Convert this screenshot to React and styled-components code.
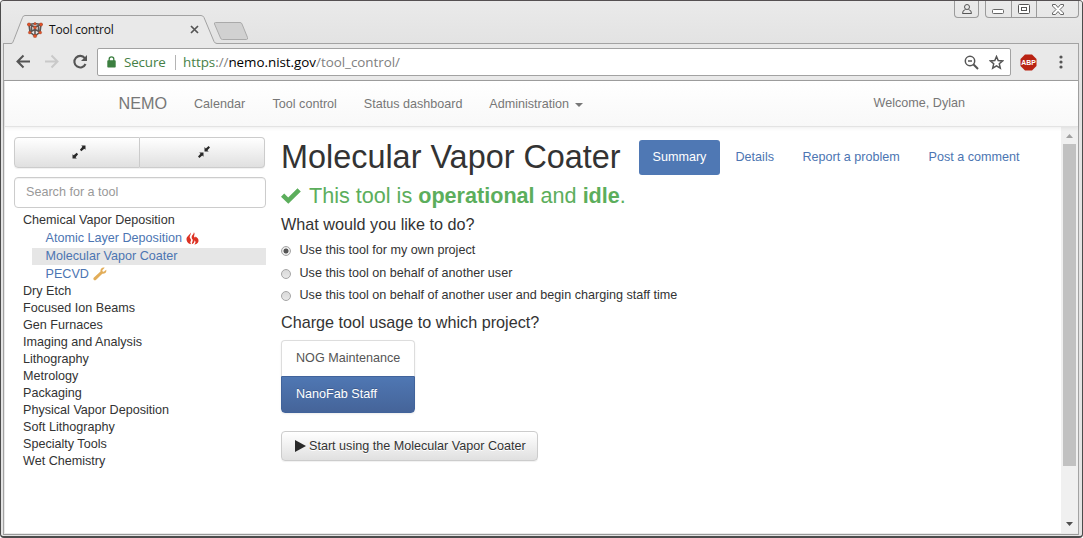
import React from "react";
import styled, { createGlobalStyle, css } from "styled-components";

const Global = createGlobalStyle`
  *, *::before, *::after { box-sizing: border-box; }
  body { margin: 0; background: #fff; overflow: hidden; }
  button, input { font: inherit; }
  svg { display: block; flex: none; }
`;

const ui = `"Open Sans", "Noto Sans", sans-serif`;

const BrowserWindow = styled.div`
  width: 1083px;
  height: 538px;
  display: flex;
  flex-direction: column;
  border: 1px solid #4c4c4c;
  border-top-color: #555052;
  border-bottom-width: 2px;
  border-radius: 4px;
  background: #e4e4e4;
  overflow: hidden;
  font-family: "Liberation Sans", Arial, sans-serif;
  font-size: 12.6px;
  color: #333;
`;

const TitleBar = styled.div`
  height: 42px;
  flex: none;
  display: flex;
  align-items: flex-start;
  padding-left: 9px;
  background: linear-gradient(#eaeaea, #e3e3e3);
`;

const Tab = styled.div`
  position: relative;
  width: 208px;
  height: 29px;
  margin-top: 14px;
  display: flex;
  align-items: center;
  padding: 0 19px 0 17px;
  z-index: 1;
`;

const TabShape = styled.svg`
  position: absolute;
  inset: 0;
  z-index: -1;
`;

const TabTitle = styled.span`
  flex: 1;
  margin-left: 6px;
  font: 12px/16px ${ui};
  letter-spacing: -0.2px;
  color: #111;
`;

const NewTab = styled.svg`
  margin: 21px 0 0 -5px;
`;

const WindowControls = styled.div`
  display: flex;
  margin-left: auto;
  margin-right: 3px;
`;

const ControlGroup = styled.div`
  display: flex;
  height: 17px;
  margin-left: ${(p) => p.$gap || 0}px;
  border: 1px solid #9b9b9b;
  border-top: 0;
  border-radius: 0 0 4px 4px;
`;

const Control = styled.div`
  width: ${(p) => p.$w}px;
  height: 16px;
  display: flex;
  align-items: center;
  justify-content: center;
  & + & { border-left: 1px solid #9b9b9b; }
`;

const Frame = styled.div`
  flex: 1;
  min-height: 0;
  margin: 0 3px 1px 2px;
  display: flex;
  flex-direction: column;
  border: 1px solid #a3a3a3;
  border-bottom-color: #9a9a9a;
  padding: 0 0 1px 1px;
  background: #e9e9e9;
`;

const Toolbar = styled.div`
  height: 37px;
  flex: none;
  display: flex;
  align-items: center;
  margin-left: -1px;
  border-bottom: 1px solid #9f9f9f;
  padding: 0 14px 0 12px;
  background: #e9e9e9;
`;

const NavIcons = styled.div`
  display: flex;
  gap: 13px;
  margin-right: 9px;
`;

const AddressBar = styled.div`
  width: 914px;
  height: 28px;
  display: flex;
  align-items: center;
  border: 1px solid #a2a2a2;
  border-radius: 2px;
  background: #fff;
  padding: 0 6px 0 9px;
  font: 13.4px/20px ${ui};
  color: #808080;
`;

const Secure = styled.span`
  margin-left: 8px;
  box-sizing: content-box;
  width: 51px;
  letter-spacing: -0.15px;
  border-right: 1px solid #b4b4b4;
  margin-right: 7px;
  line-height: 15px;
  color: #467f46;
  white-space: nowrap;
`;

const Url = styled.span`
  flex: 1;
  letter-spacing: -0.03px;
`;
const Scheme = styled.span`color: #467f46;`;
const Host = styled.span`color: #000;`;

const AddressActions = styled.div`
  display: flex;
  gap: 10px;
`;

const Extensions = styled.div`
  display: flex;
  align-items: center;
  margin-left: 9px;
`;

const Badge = styled.svg`
  margin-right: 22px;
`;

const Navbar = styled.nav`
  height: 46px;
  flex: none;
  display: flex;
  align-items: center;
  padding: 0 113px 1px 113px;
  border-bottom: 1px solid #e3e3e3;
  background: linear-gradient(#fff, #f8f8f8);
  color: #777;
  z-index: 1;
  box-shadow: 0 1px 4px rgba(0, 0, 0, 0.075);
`;

const Brand = styled.span`
  width: 76px;
  padding: 1px 0 0 0.5px;
  font-size: 16.2px;
`;

const NavLink = styled.span`
  display: flex;
  align-items: center;
  width: ${(p) => p.$w}px;
  padding-top: 1px;
  white-space: nowrap;
`;

const Caret = styled.i`
  margin: 2px 0 0 6px;
  border: 4px solid transparent;
  border-top: 4px solid #777;
  border-bottom: 0;
`;

const Welcome = styled.span`
  margin-left: auto;
  padding-bottom: 1px;
`;

const Viewport = styled.div`
  flex: 1;
  min-height: 0;
  display: flex;
  background: #fff;
`;

const Sidebar = styled.aside`
  width: 261px;
  flex: none;
  padding: 10px 0 0 9px;
`;

const raised = css`
  border: 1px solid #ccc;
  background: linear-gradient(#fff, #e0e0e0);
  box-shadow: 0 1px 1px rgba(0, 0, 0, 0.06);
`;

const ButtonPair = styled.div`
  display: flex;
  width: 251px;
  height: 31px;
`;

const PairButton = styled.button`
  ${raised}
  display: flex;
  align-items: center;
  justify-content: center;
  flex: 1;
  padding: 0 0 2px 4px;
  &:first-child { border-radius: 4px 0 0 4px; }
  &:last-child { border-radius: 0 4px 4px 0; border-left-width: 0; }
`;

const Search = styled.input`
  display: block;
  width: 252px;
  height: 31px;
  margin: 9px 0 3px;
  padding: 0 11px 2px;
  border: 1px solid #ccc;
  border-radius: 4px;
  box-shadow: inset 0 1px 1px rgba(0, 0, 0, 0.06);
  outline: 0;
  &::placeholder { color: #999; opacity: 1; }
`;

const Tree = styled.ul`
  width: 252px;
  margin: 0;
  padding: 1px 0 0 9px;
  list-style: none;
  line-height: 17px;
`;

const Category = styled.li`
  white-space: nowrap;
`;

const ToolList = styled.ul`
  margin: 0 0 0 9px;
  padding: 0;
  list-style: none;
`;

const Tool = styled.li`
  display: flex;
  align-items: center;
  height: ${(p) => p.$h || 17}px;
  padding-left: 13.5px;
  gap: 4px;
  color: #4c75b2;
  background: ${(p) => (p.$selected ? "#e6e6e6" : "transparent")};
`;

const Main = styled.main`
  flex: 1;
  padding: 12px 0 0 15px;
`;

const Heading = styled.div`
  display: flex;
  height: 36px;
`;

const Title = styled.h1`
  width: 358px;
  margin: 0;
  font-size: 32.4px;
  font-weight: 400;
  line-height: 36px;
  white-space: nowrap;
`;

const Tabs = styled.div`
  display: flex;
  gap: 2px;
  margin-top: 1px;
  height: 35px;
`;

const Pill = styled.span`
  width: ${(p) => p.$w}px;
  display: flex;
  align-items: center;
  padding: 0 0 1px 13.5px;
  border-radius: 3px;
  white-space: nowrap;
  color: ${(p) => (p.$active ? "#fff" : "#4c75b2")};
  background: ${(p) => (p.$active ? "#4f78b4" : "none")};
`;

const Status = styled.div`
  display: flex;
  align-items: center;
  gap: 8px;
  height: 28px;
  margin-top: 7px;
  font-size: 21.6px;
  color: #5cae5c;
  white-space: nowrap;
`;

const Question = styled.h4`
  height: 18px;
  margin: ${(p) => p.$top}px 0 0;
  font-size: 16.2px;
  font-weight: 400;
  line-height: 18px;
`;

const Choices = styled.div`
  display: flex;
  flex-direction: column;
  margin-top: 6px;
`;

const Choice = styled.label`
  display: flex;
  align-items: center;
  height: 22.5px;
  white-space: nowrap;
`;

const Radio = styled.span`
  width: 10px;
  height: 10px;
  margin: 2px 8.5px 0 0;
  flex: none;
  border: 1px solid #a5a5a5;
  border-radius: 50%;
  background: ${(p) =>
    p.$checked
      ? "radial-gradient(circle, #555 0 2.2px, #e8e8e8 2.8px)"
      : "linear-gradient(#d9d9d9, #e8e8e8)"};
`;

const ProjectList = styled.div`
  width: 134px;
  margin-top: 9px;
  border-radius: 4px;
  box-shadow: 0 1px 2px rgba(0, 0, 0, 0.075);
`;

const Project = styled.div`
  height: ${(p) => (p.$active ? 37 : 36)}px;
  display: flex;
  align-items: center;
  padding: 0 0 1px 14px;
  border: 1px solid #ddd;
  border-bottom: 0;
  border-radius: 4px 4px 0 0;
  color: #555;
  ${(p) =>
    p.$active &&
    css`
      border: 1px solid #41639b;
      border-radius: 0 0 4px 4px;
      background: linear-gradient(#4f77b3, #456499);
      color: #fff;
      text-shadow: 0 -1px 0 #3e5c8e;
    `}
`;

const StartButton = styled.button`
  ${raised}
  display: flex;
  align-items: center;
  gap: 3px;
  width: 257px;
  height: 30px;
  margin-top: 18px;
  padding: 0 0 0 13px;
  border-radius: 4px;
  color: #333;
  white-space: nowrap;
  text-shadow: 0 1px 0 #fff;
`;

const Scrollbar = styled.div`
  width: 17px;
  display: flex;
  flex-direction: column;
  align-items: center;
  padding: 7px 0 7px;
  background: #f0f0f0;
`;

const Thumb = styled.div`
  width: 13px;
  height: 322px;
  margin: 6px 0 auto;
  background: #c1c1c1;
`;

const Favicon = () => (
  <svg width="16" height="16" viewBox="0 0 16 16">
    <path d="M2 2.500 8 1.500 14 2.500 8 5ZM2 2.500 3 10 8 14 13 10 14 2.500M8 5V14M3 10 8 7.500 13 10M4.500 4V10M11.500 4V10" fill="none" stroke="#5d5654" strokeWidth="1.600" />
    <g fill="#e2542a" stroke="#813d2b" strokeWidth=".3">
      <circle cx="2" cy="2.500" r="1.700" /><circle cx="8" cy="1.800" r="1.300" /><circle cx="14" cy="2.500" r="1.700" />
      <circle cx="8" cy="5.500" r="1.600" /><circle cx="2.800" cy="10.500" r="1.500" /><circle cx="13.200" cy="10.500" r="1.500" /><circle cx="8" cy="14" r="1.800" />
    </g>
  </svg>
);

const Arrow = ({ color, flip }) => (
  <svg width="15" height="15" viewBox="0 0 15 15" fill="none" stroke={color} strokeWidth="2">
    <path d={flip ? "M1 7.5H13M7.5 1.5 13.5 7.5 7.5 13.5" : "M14 7.5H2M7.5 1.5 1.5 7.5 7.5 13.5"} />
  </svg>
);

const Reload = () => (
  <svg width="16" height="16" viewBox="0 0 16 16">
    <path d="M12.800 4.100A5.800 5.800 0 1 0 13.500 10" fill="none" stroke="#555" strokeWidth="2.1" />
    <path d="M15 1V7H9Z" fill="#555" />
  </svg>
);

const Fire = () => (
  <svg width="13" height="13" viewBox="0 0 13 13" fill="#dc3223">
    <path d="M4.700.4C5.400 2.200 3.400 3.800 3.700 5.300c.2 1.200 1.500 1.700 1.300 3-.1.900-.8 1.400-.6 2.500.1.700.5 1.100.9 1.500C2.500 11.900.3 9.500.5 6.700.6 4.300 3.700 3 4.700.4Z" />
    <path d="M7.900.200C9.500 1.900 7.500 3.700 8.300 5.100c.5.900 1.200.4 1.100-.6C11.500 5.600 12.900 7.200 12.500 9.200 12.200 10.900 10.400 12.300 8.300 12.600 10 10.800 9.700 9.400 8.700 8.200 8.400 10 7.800 11.400 5.900 12.300 5.600 10.200 7.300 9.300 6.600 7.600 5.700 6.200 5.300 5.200 6 3.700 6.500 2.600 8 1.800 7.900.2Z" />
  </svg>
);

const Wrench = () => (
  <svg width="14" height="14" viewBox="0 0 14 14">
    <path d="M13.200 2.800 10.800 4.700 9.600 4.400 9.300 3.200 11.700.7C9.500-.2 7 1.500 7.500 4.500L.7 10.700C-.4 12.200 1.400 14 2.900 13L9.300 6.800C12 7.100 13.900 5.100 13.200 2.800Z" fill="#e2ad59" />
  </svg>
);

const Expand = () => (
  <svg width="14" height="14" viewBox="0 0 14 14" fill="#292929">
    <path d="M9.200.5H13.500V4.800L12.300 3.700 9.300 6.200 7.900 4.800 10.400 1.800ZM4.800 13.500H.5V9.200L1.700 10.300 4.700 7.800 6.100 9.200 3.600 12.200Z" />
  </svg>
);

const Collapse = () => (
  <svg width="12" height="12" viewBox="0 0 12 12" fill="#292929">
    <path d="M10.600 0 12 1.400 9.400 4.200 10.700 5.400H6.500V1.100L7.800 2.500ZM1.400 12 0 10.600 2.500 7.700 1.200 6.500H5.500V10.800L4.200 9.500Z" />
  </svg>
);

const categories = [
  "Dry Etch", "Focused Ion Beams", "Gen Furnaces", "Imaging and Analysis",
  "Lithography", "Metrology", "Packaging", "Physical Vapor Deposition",
  "Soft Lithography", "Specialty Tools", "Wet Chemistry",
];

export default function App() {
  return (
    <>
      <Global />
      <BrowserWindow>
        <TitleBar>
          <Tab>
            <TabShape width="208" height="29" viewBox="0 0 208 29">
              <path d="M0 28.500H1C3 28.500 3 26.500 4 24.500L12.500 2.500Q13.200.5 15 .5H191Q193 .5 194 2.500L204 26.500Q205 28.500 207 28.500V29H0Z" fill="#e9e9e9" />
              <path d="M0 28.500H1C3 28.500 3 26.500 4 24.500L12.500 2.500Q13.200.5 15 .5H191Q193 .5 194 2.500L204 26.500Q205 28.500 207 28.500" fill="none" stroke="#a2a2a2" />
            </TabShape>
            <Favicon />
            <TabTitle>Tool control</TabTitle>
            <svg width="9" height="9" viewBox="0 0 9 9"><path d="M1 1 8 8M8 1 1 8" stroke="#555" strokeWidth="1.7" /></svg>
          </Tab>
          <NewTab width="36" height="18" viewBox="0 0 36 18">
            <path d="M2.500.5H27Q28.500.5 29 2L34.500 15.500Q35 17.500 33.500 17.500H9.500Q8 17.500 7.500 16L1.500 2Q1 .5 2.500.5Z" fill="#d1d1d1" stroke="#aaa" />
          </NewTab>
          <WindowControls>
            <ControlGroup>
              <Control $w={23}>
                <svg width="12" height="12" viewBox="0 0 12 12" fill="none" stroke="#555"><circle cx="6" cy="4" r="2.500" /><path d="M4.500 6.500Q1.500 7 1.500 10.500H10.500Q10.500 7 7.500 6.500" /></svg>
              </Control>
            </ControlGroup>
            <ControlGroup $gap={6}>
              <Control $w={25}>
                <svg width="13" height="12" viewBox="0 0 13 12"><rect x=".5" y="6.500" width="11" height="4" rx="1" fill="#fff" stroke="#666" /></svg>
              </Control>
              <Control $w={25}>
                <svg width="12" height="10" viewBox="0 0 12 10" fill="#fff" stroke="#555"><rect x=".5" y=".5" width="11" height="9" rx="1" /><rect x="3.500" y="3.500" width="5" height="3" /></svg>
              </Control>
              <Control $w={42}>
                <svg width="12" height="11" viewBox="0 0 12 11"><path d="M.5.5H3.500L6 3.500 8.500.5H11.500V2L8 5.500 11.500 9V10.500H8.500L6 7.500 3.500 10.500H.5V9L4 5.500.5 2Z" fill="#fff" stroke="#666" /></svg>
              </Control>
            </ControlGroup>
          </WindowControls>
        </TitleBar>
        <Frame>
          <Toolbar>
            <NavIcons><Arrow color="#555" /><Arrow color="#c9c9c9" flip /><Reload /></NavIcons>
            <AddressBar>
              <svg width="9" height="12" viewBox="0 0 9 12"><path d="M2.200 5V3Q2.200.8 4.500.8T6.800 3V5" fill="none" stroke="#3c7f40" strokeWidth="1.300" /><rect x=".3" y="4.300" width="8.400" height="7.200" rx=".8" fill="#3c7f40" /></svg>
              <Secure>Secure</Secure>
              <Url><Scheme>https</Scheme>://<Host>nemo.nist.gov</Host>/tool_control/</Url>
              <AddressActions>
                <svg width="15" height="15" viewBox="0 0 15 15" fill="none" stroke="#555" strokeWidth="1.500"><circle cx="6" cy="6" r="4.700" /><path d="M4 6H8" /><path d="M9.300 9.300 14 14" strokeWidth="2" /></svg>
                <svg width="15" height="15" viewBox="0 0 15 15"><path d="M7.500 1.500 9.200 5.500 13.600 5.900 10.300 8.800 11.300 13.100 7.500 10.800 3.700 13.100 4.700 8.800 1.400 5.900 5.800 5.500Z" fill="none" stroke="#555" strokeWidth="1.500" /></svg>
              </AddressActions>
            </AddressBar>
            <Extensions>
              <Badge width="17" height="17" viewBox="0 0 17 17">
                <path d="M5 .5H12L16.500 5V12L12 16.500H5L.5 12V5Z" fill="#b92313" />
                <text x="8.500" y="11.300" textAnchor="middle" textLength="14.500" lengthAdjust="spacingAndGlyphs" fontFamily="Liberation Sans, sans-serif" fontWeight="700" fontSize="8" fill="#fff">ABP</text>
              </Badge>
              <svg width="4" height="14" viewBox="0 0 4 14" fill="#555"><circle cx="2" cy="2" r="1.600" /><circle cx="2" cy="7" r="1.600" /><circle cx="2" cy="12" r="1.600" /></svg>
            </Extensions>
          </Toolbar>
          <Navbar>
            <Brand>NEMO</Brand>
            <NavLink $w={78.5}>Calendar</NavLink>
            <NavLink $w={91.3}>Tool control</NavLink>
            <NavLink $w={125.5}>Status dashboard</NavLink>
            <NavLink $w={100}>Administration <Caret /></NavLink>
            <Welcome>Welcome, Dylan</Welcome>
          </Navbar>
          <Viewport>
            <Sidebar>
              <ButtonPair>
                <PairButton aria-label="Expand all"><Expand /></PairButton>
                <PairButton aria-label="Collapse all"><Collapse /></PairButton>
              </ButtonPair>
              <Search placeholder="Search for a tool" />
              <Tree>
                <Category>
                  Chemical Vapor Deposition
                  <ToolList>
                    <Tool $h={19}>Atomic Layer Deposition <Fire /></Tool>
                    <Tool $selected>Molecular Vapor Coater</Tool>
                    <Tool $h={18}>PECVD <Wrench /></Tool>
                  </ToolList>
                </Category>
                {categories.map((name) => <Category key={name}>{name}</Category>)}
              </Tree>
            </Sidebar>
            <Main>
              <Heading>
                <Title>Molecular Vapor Coater</Title>
                <Tabs>
                  <Pill $w={81} $active>Summary</Pill>
                  <Pill $w={65}>Details</Pill>
                  <Pill $w={124}>Report a problem</Pill>
                  <Pill $w={118}>Post a comment</Pill>
                </Tabs>
              </Heading>
              <Status>
                <svg width="20" height="16" viewBox="0 0 20 16"><path d="M0 8.800 3.200 5.600 7.200 9.500 16.500.3 19.800 3.500 7.300 15.800Z" fill="#5cae5c" /></svg>
                <span>This tool is <b>operational</b> and <b>idle</b>.</span>
              </Status>
              <Question $top={5}>What would you like to do?</Question>
              <Choices>
                <Choice><Radio $checked />Use this tool for my own project</Choice>
                <Choice><Radio />Use this tool on behalf of another user</Choice>
                <Choice><Radio />Use this tool on behalf of another user and begin charging staff time</Choice>
              </Choices>
              <Question $top={6}>Charge tool usage to which project?</Question>
              <ProjectList>
                <Project>NOG Maintenance</Project>
                <Project $active>NanoFab Staff</Project>
              </ProjectList>
              <StartButton>
                <svg width="11" height="12" viewBox="0 0 11 12"><path d="M0 0 11 6 0 12Z" fill="#292929" /></svg>
                Start using the Molecular Vapor Coater
              </StartButton>
            </Main>
            <Scrollbar>
              <svg width="7" height="4" viewBox="0 0 7 4"><path d="M0 4 3.500 0 7 4Z" fill="#a0a0a0" /></svg>
              <Thumb />
              <svg width="7" height="4" viewBox="0 0 7 4"><path d="M0 0H7L3.500 4Z" fill="#505050" /></svg>
            </Scrollbar>
          </Viewport>
        </Frame>
      </BrowserWindow>
    </>
  );
}
